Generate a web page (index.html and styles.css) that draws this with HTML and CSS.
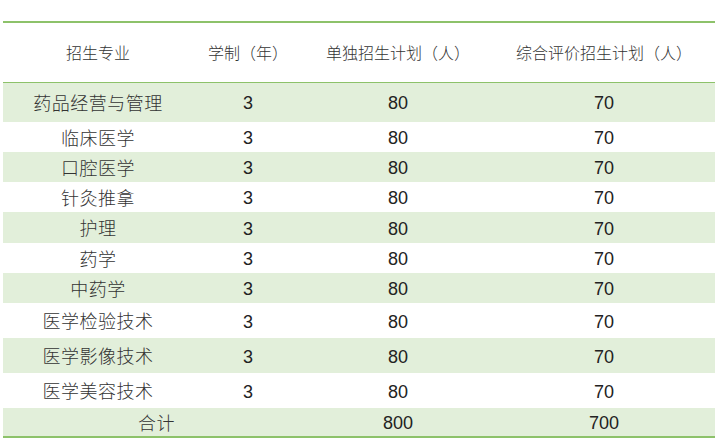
FILE: index.html
```html
<!DOCTYPE html>
<html lang="zh-CN">
<head>
<meta charset="utf-8">
<title>招生计划</title>
<link rel="stylesheet" href="styles.css">
</head>
<body>
<table class="plan">
  <colgroup>
    <col class="c1"><col class="c2"><col class="c3"><col class="c4">
  </colgroup>
  <thead>
    <tr class="head">
      <th>招生专业</th><th>学制（年）</th><th>单独招生计划（人）</th><th>综合评价招生计划（人）</th>
    </tr>
  </thead>
  <tbody>
    <tr class="alt h40"><td>药品经营与管理</td><td>3</td><td>80</td><td>70</td></tr>
    <tr class="h30"><td>临床医学</td><td>3</td><td>80</td><td>70</td></tr>
    <tr class="alt h30"><td>口腔医学</td><td>3</td><td>80</td><td>70</td></tr>
    <tr class="h30"><td>针灸推拿</td><td>3</td><td>80</td><td>70</td></tr>
    <tr class="alt h31"><td>护理</td><td>3</td><td>80</td><td>70</td></tr>
    <tr class="h30"><td>药学</td><td>3</td><td>80</td><td>70</td></tr>
    <tr class="alt h30"><td>中药学</td><td>3</td><td>80</td><td>70</td></tr>
    <tr class="h35"><td>医学检验技术</td><td>3</td><td>80</td><td>70</td></tr>
    <tr class="alt h35"><td>医学影像技术</td><td>3</td><td>80</td><td>70</td></tr>
    <tr class="h35"><td>医学美容技术</td><td>3</td><td>80</td><td>70</td></tr>
    <tr class="alt total"><td class="sum">合计</td><td></td><td>800</td><td>700</td></tr>
  </tbody>
</table>
</body>
</html>
```
FILE: styles.css
```css
html, body {
  margin: 0;
  padding: 0;
  background: #ffffff;
}
body {
  font-family: "Liberation Sans", "Noto Sans CJK SC", sans-serif;
  color: #222222;
}
.plan {
  margin: 21px 0 0 3px;
  width: 712px;
  border-collapse: collapse;
  table-layout: fixed;
  border-top: 2px solid #8dc26a;
  border-bottom: 2px solid #8dc26a;
}
.c1 { width: 190px; }
.c2 { width: 110px; }
.c3 { width: 190px; }
.c4 { width: 222px; }
.plan th, .plan td {
  padding: 0;
  text-align: center;
  vertical-align: middle;
  white-space: nowrap;
  line-height: 20px;
}
.plan th {
  font-weight: 300;
  font-size: 16px;
  color: #333333;
  padding-top: 4px;
}
.plan td {
  font-size: 18px;
  padding-top: 2px;
}
.plan td:first-child {
  font-size: 18px;
  font-weight: 300;
  letter-spacing: 0.5px;
  color: #333333;
  padding-top: 3px;
}
.head {
  height: 60px;
  border-bottom: 1px solid #8dc26a;
}
.alt { background: #e2efda; }
.h40 { height: 40px; }
.h30 { height: 30px; }
.h31 { height: 31px; }
.h35 { height: 35px; }
.total { height: 29px; }
.plan td.sum {
  text-align: right;
  padding-right: 18px;
}
```
